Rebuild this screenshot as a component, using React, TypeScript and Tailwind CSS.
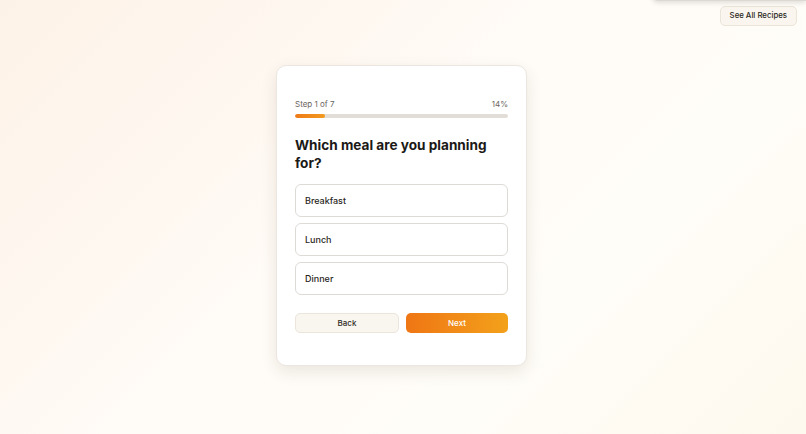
import { useState } from "react";

const options = ["Breakfast", "Lunch", "Dinner"];

export default function App() {
  const [selected, setSelected] = useState<string | null>(null);
  const step = 1;
  const total = 7;
  const pct = Math.round((step / total) * 100);

  return (
    <div
      className="relative flex h-[434px] w-full flex-col overflow-hidden bg-[linear-gradient(135deg,#fdf2e7_0%,#fffbf6_45%,#fffdf8_70%,#fef9ee_100%)] text-[#1c1a17]"
      style={{ fontFamily: "Inter, 'Noto Sans', sans-serif" }}
    >
      {/* panel peeking from the top edge */}
      <div className="absolute right-0 top-[-40px] h-[41px] w-[154px] rounded-bl-md border-b border-[#dcd8d2] bg-[#fbf9f6] shadow-[0_2px_5px_rgba(0,0,0,0.12)]" />

      <div className="flex justify-end px-[9px] pt-[6px]">
        <button className="h-[20px] rounded-[5px] border border-[#ebe4d9] bg-[#faf6ef] px-[9px] text-[7.8px] font-medium text-[#2a2722]">
          See All Recipes
        </button>
      </div>

      <div className="flex justify-center pr-[3px] pt-[39px]">
        <div className="w-[251px] rounded-[10px] border border-[#ebe6df] bg-white px-[18px] pb-[32px] pt-[32px] shadow-[0_6px_16px_rgba(60,40,20,0.10)]">
          <div className="flex items-center justify-between text-[8px] text-[#6b6660]">
            <span>
              Step {step} of {total}
            </span>
            <span>{pct}%</span>
          </div>
          <div className="mt-[4px] h-[4px] w-full overflow-hidden rounded-full bg-[#e2ddd6]">
            <div
              className="h-full rounded-full bg-[linear-gradient(90deg,#ef7a16,#f29a20)]"
              style={{ width: `${pct}%` }}
            />
          </div>

          <h1 className="mt-[18px] pr-[10px] text-[13.6px] font-bold leading-[18px] text-[#1b1916]">
            Which meal are you planning for?
          </h1>

          <div className="mt-[12px] flex flex-col gap-[6px]">
            {options.map((o) => (
              <button
                key={o}
                onClick={() => setSelected(o)}
                className={
                  selected === o
                    ? "flex h-[33px] items-center rounded-[6px] border-[1.5px] border-[#f08a1c] bg-[#fff7ee] px-[9px] text-left text-[9px] font-medium text-[#2a2723]"
                    : "flex h-[33px] items-center rounded-[6px] border-[1.5px] border-[#dedbd7] bg-white px-[9px] text-left text-[9px] font-medium text-[#2a2723]"
                }
              >
                {o}
              </button>
            ))}
          </div>

          <div className="mt-[18px] flex gap-[7px]">
            <button className="h-[20px] flex-1 rounded-[5px] border border-[#ebe5dc] bg-[#f9f6f0] text-[8px] font-medium text-[#2f2b26]">
              Back
            </button>
            <button className="h-[20px] flex-1 rounded-[5px] bg-[linear-gradient(90deg,#ef7614,#f3a11b)] text-[8px] font-medium text-white">
              Next
            </button>
          </div>
        </div>
      </div>
    </div>
  );
}
